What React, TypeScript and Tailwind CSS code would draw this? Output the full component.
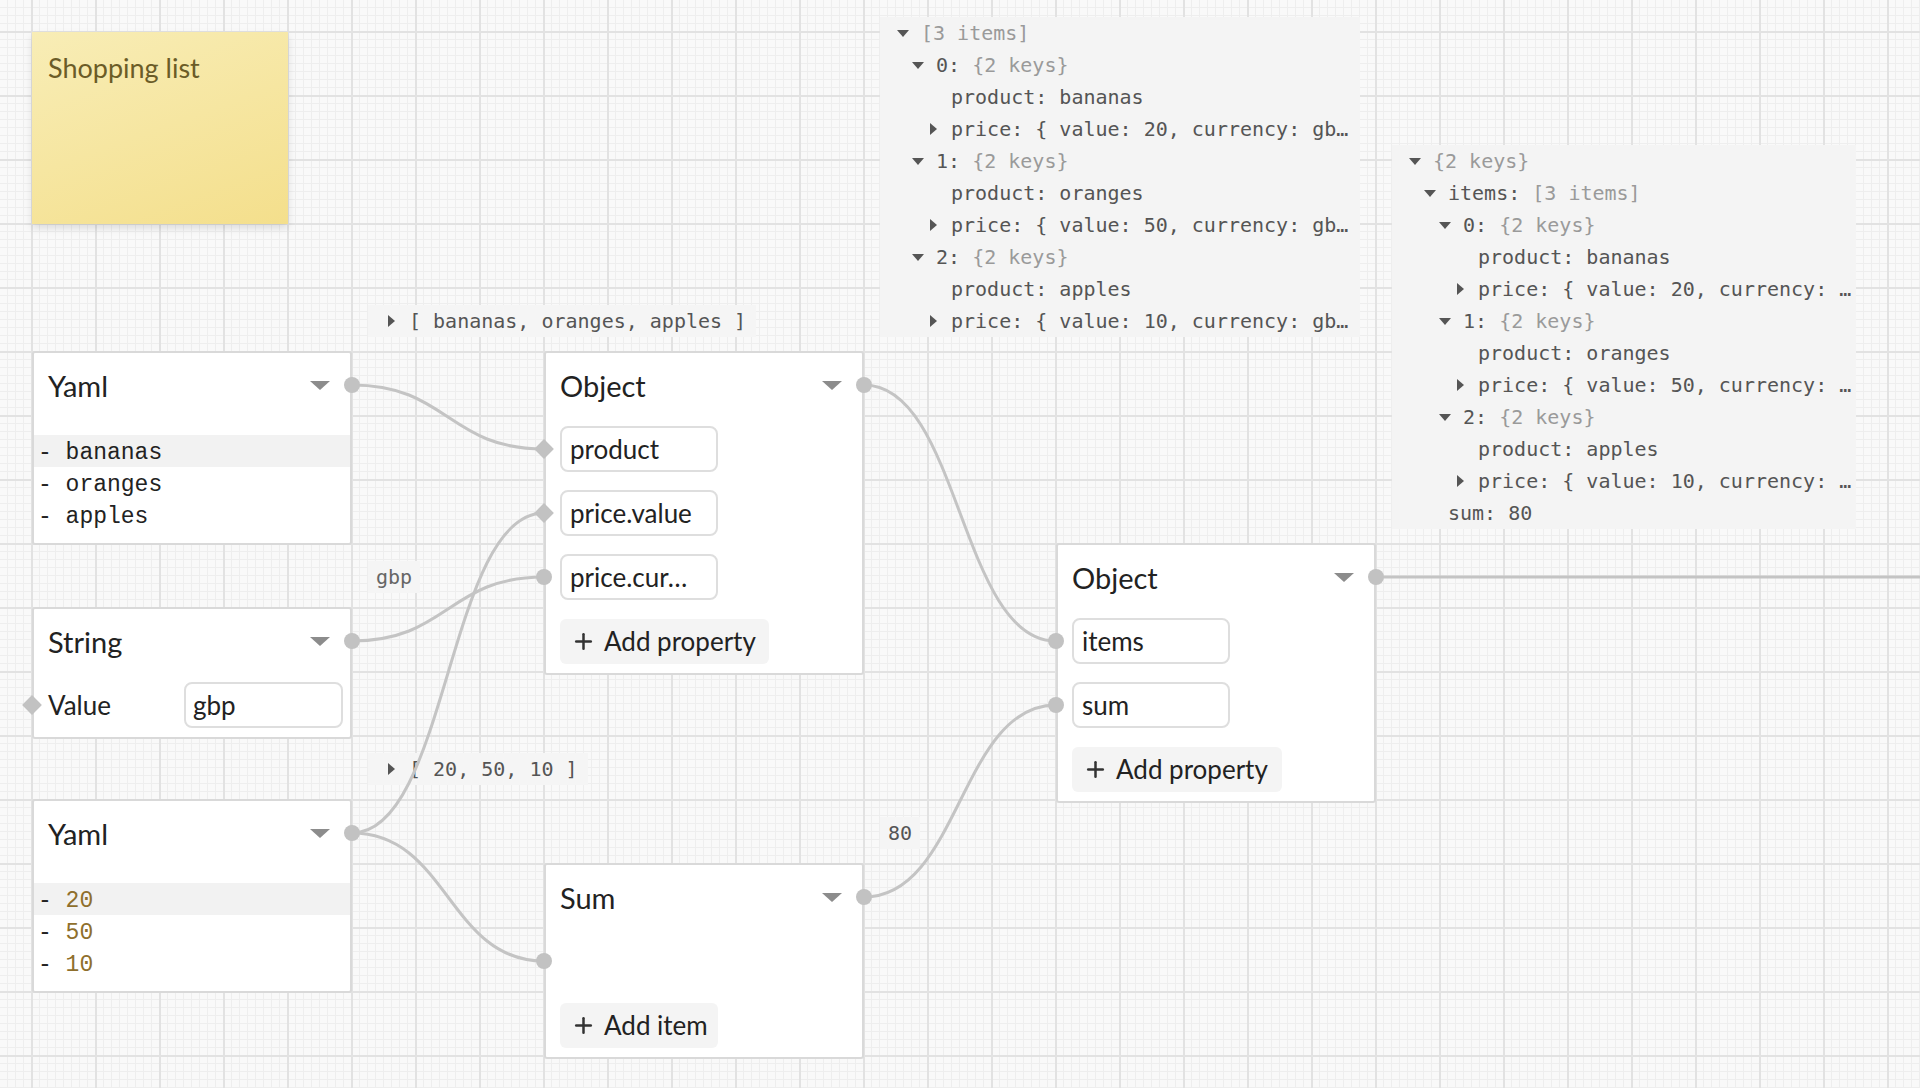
import { Plus } from "lucide-react";
import type { ReactNode } from "react";

type TreeRow = {
  level: number;
  arrow?: "down" | "right";
  k?: string;
  meta?: string;
};

const listPanel: TreeRow[] = [
  { level: 0, arrow: "down", meta: "[3 items]" },
  { level: 1, arrow: "down", k: "0:", meta: "{2 keys}" },
  { level: 2, k: "product: bananas" },
  { level: 2, arrow: "right", k: "price: { value: 20, currency: gb…" },
  { level: 1, arrow: "down", k: "1:", meta: "{2 keys}" },
  { level: 2, k: "product: oranges" },
  { level: 2, arrow: "right", k: "price: { value: 50, currency: gb…" },
  { level: 1, arrow: "down", k: "2:", meta: "{2 keys}" },
  { level: 2, k: "product: apples" },
  { level: 2, arrow: "right", k: "price: { value: 10, currency: gb…" },
];

const resultPanel: TreeRow[] = [
  { level: 0, arrow: "down", meta: "{2 keys}" },
  { level: 1, arrow: "down", k: "items:", meta: "[3 items]" },
  { level: 2, arrow: "down", k: "0:", meta: "{2 keys}" },
  { level: 3, k: "product: bananas" },
  { level: 3, arrow: "right", k: "price: { value: 20, currency: …" },
  { level: 2, arrow: "down", k: "1:", meta: "{2 keys}" },
  { level: 3, k: "product: oranges" },
  { level: 3, arrow: "right", k: "price: { value: 50, currency: …" },
  { level: 2, arrow: "down", k: "2:", meta: "{2 keys}" },
  { level: 3, k: "product: apples" },
  { level: 3, arrow: "right", k: "price: { value: 10, currency: …" },
  { level: 1, k: "sum: 80" },
];

function Arrow({ dir }: { dir: "down" | "right" }) {
  return (
    <span className="flex w-6 shrink-0 items-center">
      <span className="flex w-3 justify-center">
        {dir === "down" ? (
          <svg width="12" height="7" viewBox="0 0 12 7">
            <polygon points="0,0 12,0 6,7" fill="#555" />
          </svg>
        ) : (
          <svg width="7" height="12" viewBox="0 0 7 12">
            <polygon points="0,0 7,6 0,12" fill="#555" />
          </svg>
        )}
      </span>
    </span>
  );
}

function Tree({ rows }: { rows: TreeRow[] }) {
  return (
    <>
      {rows.map((r, i) => (
        <div
          key={i}
          className="flex h-8 items-center whitespace-pre"
          style={{ paddingLeft: 17 + 15 * r.level }}
        >
          {r.arrow ? <Arrow dir={r.arrow} /> : <span className="w-6 shrink-0" />}
          {r.k && <span className="text-[#555]">{r.k}</span>}
          {r.meta && <span className="text-[#9a9a9a]">{r.k ? " " + r.meta : r.meta}</span>}
        </div>
      ))}
    </>
  );
}

function Caret() {
  return (
    <svg width="20" height="9" viewBox="0 0 20 9">
      <polygon points="0,0 20,0 10,9" fill="#8c8c8c" />
    </svg>
  );
}

function OutPort() {
  return <span className="absolute -right-[10px] top-1/2 h-4 w-4 -translate-y-1/2 rounded-full bg-[#c2c2c2]" />;
}

function InPort({ diamond }: { diamond?: boolean }) {
  return diamond ? (
    <span className="absolute -left-[9px] top-1/2 h-[14px] w-[14px] -translate-y-1/2 rotate-45 bg-[#c2c2c2]" />
  ) : (
    <span className="absolute -left-[10px] top-1/2 h-4 w-4 -translate-y-1/2 rounded-full bg-[#c2c2c2]" />
  );
}

function Node({ pos, title, children }: { pos: string; title: string; children: ReactNode }) {
  return (
    <div className={`absolute w-[320px] rounded-[3px] border-2 border-[#d9d9d9] bg-white text-[#222] ${pos}`}>
      <div className="relative flex h-16 items-center justify-between pl-[14px] pr-5">
        <span className="text-[29px] leading-none">{title}</span>
        <Caret />
        <OutPort />
      </div>
      {children}
    </div>
  );
}

function Field({ text, port }: { text: string; port: "diamond" | "circle" }) {
  return (
    <div className="relative flex h-16 items-center pl-[14px]">
      <InPort diamond={port === "diamond"} />
      <div className="flex h-[46px] w-[158px] items-center rounded-lg border-2 border-[#dedede] px-[8px] text-[26px] leading-none">
        {text}
      </div>
    </div>
  );
}

function AddButton({ label, width }: { label: string; width: string }) {
  return (
    <div className="flex h-16 items-center pl-[14px]">
      <div className={`flex h-[45px] items-center gap-2 rounded-md bg-[#f4f4f4] pl-[11px] text-[26px] leading-none ${width}`}>
        <Plus size={25} strokeWidth={2.4} color="#333" />
        <span>{label}</span>
      </div>
    </div>
  );
}

function Code({ lines, numbers }: { lines: string[]; numbers?: boolean }) {
  return (
    <div className="pb-[12px] pt-[18px] font-['Liberation_Mono',monospace] text-[23px] text-[#222]">
      {lines.map((l, i) => (
        <div key={i} className={`flex h-8 items-center whitespace-pre pl-[4px] pt-[4px] ${i === 0 ? "bg-[#f2f2f2]" : ""}`}>
          <span>- </span>
          <span className={numbers ? "text-[#8f6f2c]" : ""}>{l}</span>
        </div>
      ))}
    </div>
  );
}

export default function App() {
  return (
    <div className="relative h-[1088px] w-[1920px] overflow-hidden bg-[#f9f9f9] bg-[linear-gradient(to_right,#e2e2e2_2px,transparent_2px),linear-gradient(to_bottom,#e2e2e2_2px,transparent_2px),linear-gradient(to_right,#eeeeee_1px,transparent_1px),linear-gradient(to_bottom,#eeeeee_1px,transparent_1px)] bg-size-[64px_64px,64px_64px,8px_8px,8px_8px] bg-position-[31px_31px] font-['Lato',sans-serif]">
      {/* sticky note */}
      <div className="absolute left-[32px] top-[32px] h-[192px] w-[256px] bg-[linear-gradient(160deg,#f8edb6,#f4df8c)] px-4 pt-[16px] text-[27px] text-[#6b5c27] shadow-[0_4px_8px_rgba(0,0,0,0.12)]">
        Shopping list
      </div>

      {/* edge value previews */}
      <div className="absolute left-[880px] top-[17px] w-[480px] bg-[#f4f4f4] font-['DejaVu_Sans_Mono',monospace] text-[20px]">
        <Tree rows={listPanel} />
      </div>
      <div className="absolute left-[1392px] top-[145px] w-[464px] bg-[#f4f4f4] font-['DejaVu_Sans_Mono',monospace] text-[20px]">
        <Tree rows={resultPanel} />
      </div>
      <div className="absolute left-[368px] top-[305px] bg-[#f5f5f5] pr-[10px] font-['DejaVu_Sans_Mono',monospace] text-[20px]">
        <Tree rows={[{ level: 0, arrow: "right", k: "[ bananas, oranges, apples ]" }]} />
      </div>
      <div className="absolute left-[368px] top-[753px] bg-[#f5f5f5] pr-[10px] font-['DejaVu_Sans_Mono',monospace] text-[20px]">
        <Tree rows={[{ level: 0, arrow: "right", k: "[ 20, 50, 10 ]" }]} />
      </div>
      <div className="absolute left-[368px] top-[561px] flex h-8 items-center bg-[#f5f5f5] px-2 font-['DejaVu_Sans_Mono',monospace] text-[20px] text-[#666]">
        gbp
      </div>
      <div className="absolute left-[880px] top-[817px] flex h-8 items-center bg-[#f5f5f5] px-2 font-['DejaVu_Sans_Mono',monospace] text-[20px] text-[#555]">
        80
      </div>

      {/* connections */}
      <svg className="absolute inset-0" width="1920" height="1088" fill="none" stroke="#c4c4c4" strokeWidth="3">
        <path d="M352 385 C448 385 448 449 544 449" />
        <path d="M352 641 C448 641 448 577 544 577" />
        <path d="M352 833 C448 833 448 513 544 513" />
        <path d="M352 833 C448 833 448 961 544 961" />
        <path d="M864 385 C960 385 960 641 1056 641" />
        <path d="M864 897 C960 897 960 705 1056 705" />
        <path d="M1376 577 L1920 577" />
      </svg>

      <Node pos="left-[32px] top-[351px]" title="Yaml">
        <Code lines={["bananas", "oranges", "apples"]} />
      </Node>

      <Node pos="left-[32px] top-[607px]" title="String">
        <div className="relative flex h-16 items-center justify-between pl-[14px] pr-[7px]">
          <InPort diamond />
          <span className="text-[26px] leading-none">Value</span>
          <div className="flex h-[46px] w-[159px] items-center rounded-lg border-2 border-[#dedede] px-[7px] text-[26px] leading-none">
            gbp
          </div>
        </div>
      </Node>

      <Node pos="left-[32px] top-[799px]" title="Yaml">
        <Code lines={["20", "50", "10"]} numbers />
      </Node>

      <Node pos="left-[544px] top-[351px]" title="Object">
        <Field text="product" port="diamond" />
        <Field text="price.value" port="diamond" />
        <Field text="price.cur…" port="circle" />
        <AddButton label="Add property" width="w-[209px]" />
      </Node>

      <Node pos="left-[544px] top-[863px]" title="Sum">
        <div className="relative h-16">
          <InPort />
        </div>
        <AddButton label="Add item" width="w-[158px]" />
      </Node>

      <Node pos="left-[1056px] top-[543px]" title="Object">
        <Field text="items" port="circle" />
        <Field text="sum" port="circle" />
        <AddButton label="Add property" width="w-[210px]" />
      </Node>
    </div>
  );
}
